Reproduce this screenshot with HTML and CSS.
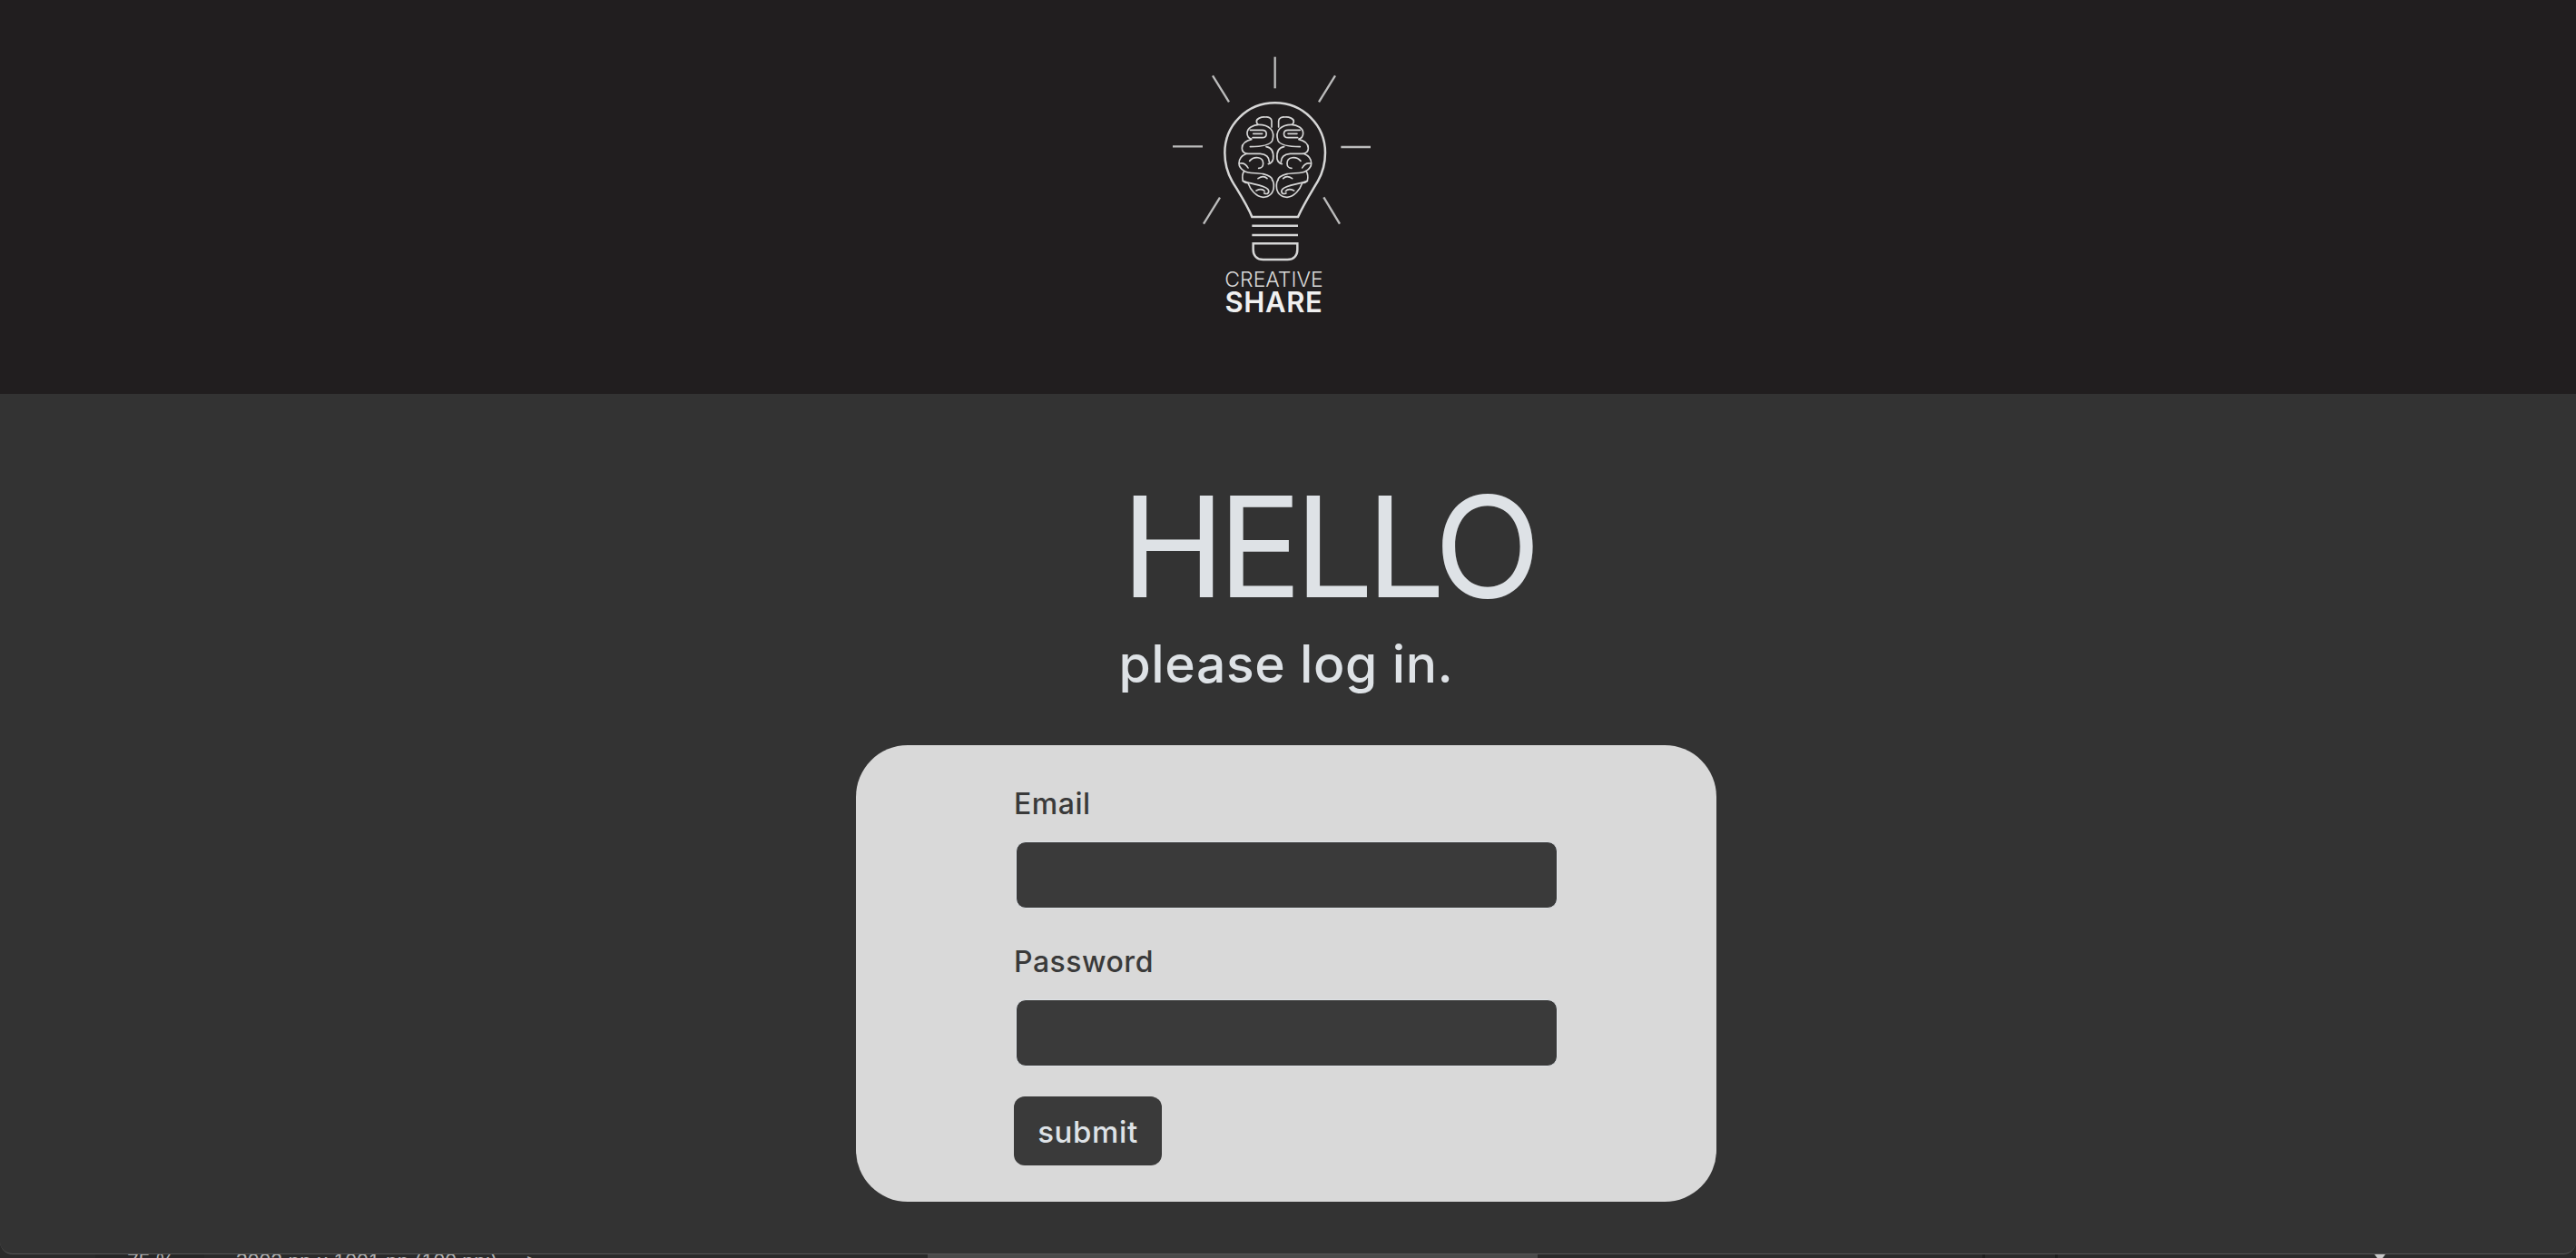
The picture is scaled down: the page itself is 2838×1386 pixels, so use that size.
FILE: index.html
```html
<!DOCTYPE html>
<html>
<head>
    <title>Creative Share - Log in</title>
    <link rel="stylesheet" href="styles.css">
</head>
<body>
    <!-- Logo bar -->
    <header class="top-bar">
        <div class="logo">
            <svg class="logo-mark" viewBox="0 0 300 253" aria-hidden="true">
                <g transform="scale(0.33333)">
                    <g class="rays">
                        <path d="M434 68V172"/>
                        <path d="M228 130L282 217"/>
                        <path d="M633 130L579 217"/>
                        <path d="M96 364H195"/>
                        <path d="M652 366H750"/>
                        <path d="M252 533L198 620"/>
                        <path d="M595 532L648 620"/>
                    </g>
                    <g class="bulb">
                        <path d="M358 597C342 557 312 512 292 478C276 450 268 420 268 385C268 293 342 220 434 220C526 220 600 293 600 385C600 420 592 450 576 478C556 512 528 557 510 597Z"/>
                        <path d="M358 626H510"/>
                        <path d="M358 657H510"/>
                        <path d="M362 685H508V705C508 726 495 738 475 738H395C375 738 362 726 362 705Z"/>
                    </g>
                    <g class="brain">
                        <g id="lobe">
                            <path d="M423 300V280C423 270 412 266 402 267C388 266 372 272 373 282C374 288 378 292 380 292C362 292 342 304 342 320C342 332 350 338 358 340C340 344 325 354 325 370C325 380 332 386 340 388C325 394 315 405 315 420C315 430 324 440 332 445C326 455 326 470 328 478C334 484 340 485 345 485C352 505 370 530 395 532C415 532 430 518 430 495C430 485 428 478 425 475"/>
                            <path d="M352 310H392C410 310 410 335 392 335H360"/>
                            <path d="M362 322H392"/>
                            <path d="M380 292C395 292 410 296 420 306C428 315 430 330 425 345C420 355 405 365 352 365"/>
                            <path d="M405 365C425 368 430 385 428 405C426 415 420 420 412 422"/>
                            <path d="M340 388H385C405 390 415 400 415 415"/>
                            <path d="M350 412C365 395 395 398 395 420C395 430 388 436 380 436"/>
                            <path d="M318 420C330 418 340 425 345 435"/>
                            <path d="M332 445C345 455 375 450 395 455C415 460 425 465 425 475"/>
                            <path d="M378 470C390 462 400 462 408 470"/>
                            <path d="M328 478C355 490 395 490 410 505C418 515 410 525 398 518"/>
                            <path d="M372 510C385 504 395 506 400 512"/>
                        </g>
                        <use href="#lobe" transform="translate(869 0) scale(-1 1)"/>
                    </g>
                </g>
            </svg>
            <div class="logo-text">
                <span class="logo-creative">CREATIVE</span>
                <span class="logo-share">SHARE</span>
            </div>
        </div>
    </header>

    <!-- Login -->
    <main class="content">
        <h1 class="hello">HELLO</h1>
        <p class="sub-title">please log in.</p>
        <form class="login-card">
            <div class="form-row">
                <label class="form-label" for="email">Email</label>
                <input class="form-input" id="email" type="email">
            </div>
            <div class="form-row">
                <label class="form-label" for="password">Password</label>
                <input class="form-input" id="password" type="password">
            </div>
            <button class="submit-btn" type="button">submit</button>
        </form>
    </main>

    <!-- Edge of the window behind -->
    <footer class="status-strip">
        <span class="status-zoom">75 %</span>
        <span class="status-size">3002 pp x 1001 pp (100 ppi)</span>
        <span class="status-arrow">&gt;</span>
        <span class="status-scroll"></span>
        <span class="status-tick first"></span>
        <span class="status-tick"></span>
        <span class="status-marker"></span>
    </footer>
</body>
</html>
```

FILE: styles.css
```css
* {
    box-sizing: border-box;
}

html, body {
    height: 100%;
}

body {
    margin: 0;
    display: flex;
    flex-direction: column;
    overflow: hidden;
    font-family: Inter, "Noto Sans", sans-serif;
    background-color: #2a2a2a;
    color: #dee2e6;
}

/* Logo bar */
.top-bar {
    height: 434px;
    flex-shrink: 0;
    display: flex;
    justify-content: center;
    padding: 40px 18px 0 0;
    background-color: #211e1f;
}

.logo {
    width: 300px;
    display: flex;
    flex-direction: column;
    align-items: center;
}

.logo-mark {
    width: 300px;
    height: 253px;
    display: block;
}

.rays path {
    fill: none;
    stroke: #bcbcbc;
    stroke-width: 7;
}

.bulb path {
    fill: none;
    stroke: #d6d6d6;
    stroke-width: 7.5;
}

.brain path {
    fill: none;
    stroke: #d6d6d6;
    stroke-width: 5;
    stroke-linecap: round;
}

.logo-text {
    margin: 4px 13px 0 0;
    display: flex;
    flex-direction: column;
    align-items: center;
}

.logo-creative {
    font-size: 23px;
    font-weight: 300;
    line-height: 22px;
    color: #d8d8d8;
}

.logo-share {
    font-size: 31px;
    font-weight: 600;
    line-height: 28px;
    letter-spacing: 0.6px;
    color: #f0f0f0;
}

/* Login */
.content {
    flex: 1;
    display: flex;
    flex-direction: column;
    align-items: center;
    padding: 91px 4px 0 0;
    background-color: #333333;
    border-bottom: 1px solid #555;
    border-radius: 0 0 14px 14px;
}

.hello {
    margin: 0 0 19px 91px;
    font-size: 154px;
    font-weight: 400;
    line-height: 154px;
    letter-spacing: -8px;
    color: #dee2e6;
}

.sub-title {
    margin: 0 0 55px;
    font-size: 57px;
    font-weight: 500;
    line-height: 68px;
    letter-spacing: 0.6px;
    color: #dee2e6;
}

.login-card {
    width: 948px;
    height: 503px;
    padding: 39px 174px 0;
    border-radius: 57px;
    background-color: #d9d9d9;
}

.form-row {
    margin-bottom: 33px;
}

.form-label {
    display: block;
    margin-bottom: 15px;
    font-size: 32px;
    font-weight: 500;
    line-height: 52px;
    letter-spacing: 0.5px;
    color: #3a3a3a;
}

.form-input {
    display: block;
    width: 597px;
    height: 74px;
    margin-left: 2px;
    border: 1px solid #dee2e6;
    border-radius: 11px;
    background-color: #3a3a3a;
}

.submit-btn {
    display: block;
    width: 163px;
    height: 76px;
    padding: 2px 0 0;
    border: 0;
    border-radius: 12px;
    font-family: inherit;
    font-size: 33px;
    font-weight: 500;
    letter-spacing: 0.6px;
    color: #dee2e6;
    background-color: #3a3a3a;
}

/* Edge of the window behind */
.status-strip {
    height: 4px;
    flex-shrink: 0;
    display: flex;
    overflow: hidden;
    font-family: "Liberation Sans", sans-serif;
    font-size: 23px;
    line-height: 17px;
    color: #b0b0b0;
}

.status-zoom {
    width: 120px;
    margin-left: 105px;
    padding-left: 35px;
    white-space: nowrap;
    background-color: #262626;
}

.status-size {
    width: 355px;
    padding-left: 35px;
    white-space: nowrap;
}

.status-arrow {
    width: 442px;
}

.status-scroll {
    width: 672px;
    background-color: #4a4a4a;
}

.status-tick {
    width: 3px;
    margin-left: 77px;
    background-color: #1e1e1e;
}

.status-tick.first {
    margin-left: 490px;
}

.status-marker {
    width: 0;
    height: 0;
    margin-left: 349px;
    border-left: 6px solid transparent;
    border-right: 6px solid transparent;
    border-top: 8px solid #c8c8c8;
}
```
